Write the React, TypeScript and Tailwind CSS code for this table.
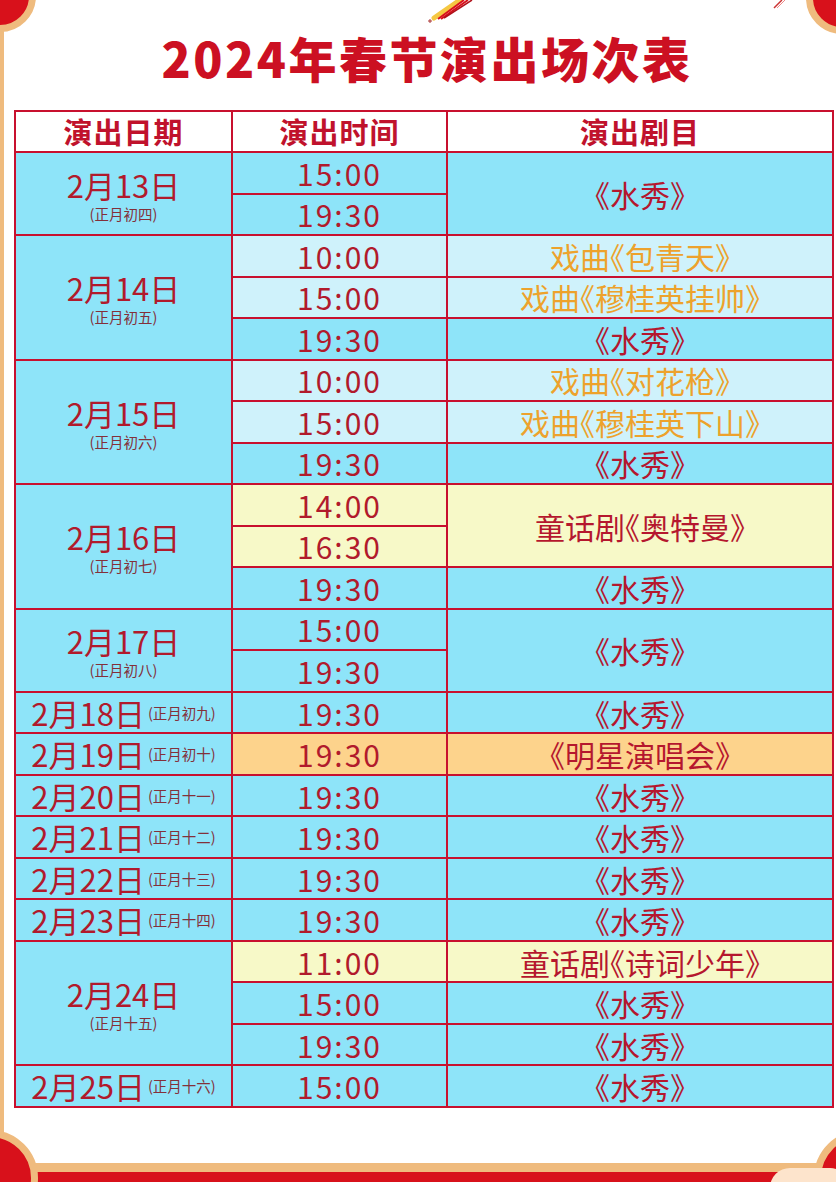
import React from 'react';

type Tone = 'b' | 'l' | 'y' | 'o';

interface Slot {
  time: string;
  tone: Tone;
  prog?: { text: string; span: number; tone: Tone; color: 'red' | 'orange' };
}

interface Day {
  date: string;
  lunar: string;
  slots: Slot[];
}

const SHUI = '《水秀》';

const days: Day[] = [
  {
    date: '2月13日',
    lunar: '正月初四',
    slots: [
      { time: '15:00', tone: 'b', prog: { text: SHUI, span: 2, tone: 'b', color: 'red' } },
      { time: '19:30', tone: 'b' },
    ],
  },
  {
    date: '2月14日',
    lunar: '正月初五',
    slots: [
      { time: '10:00', tone: 'l', prog: { text: '戏曲《包青天》', span: 1, tone: 'l', color: 'orange' } },
      { time: '15:00', tone: 'l', prog: { text: '戏曲《穆桂英挂帅》', span: 1, tone: 'l', color: 'orange' } },
      { time: '19:30', tone: 'b', prog: { text: SHUI, span: 1, tone: 'b', color: 'red' } },
    ],
  },
  {
    date: '2月15日',
    lunar: '正月初六',
    slots: [
      { time: '10:00', tone: 'l', prog: { text: '戏曲《对花枪》', span: 1, tone: 'l', color: 'orange' } },
      { time: '15:00', tone: 'l', prog: { text: '戏曲《穆桂英下山》', span: 1, tone: 'l', color: 'orange' } },
      { time: '19:30', tone: 'b', prog: { text: SHUI, span: 1, tone: 'b', color: 'red' } },
    ],
  },
  {
    date: '2月16日',
    lunar: '正月初七',
    slots: [
      { time: '14:00', tone: 'y', prog: { text: '童话剧《奥特曼》', span: 2, tone: 'y', color: 'red' } },
      { time: '16:30', tone: 'y' },
      { time: '19:30', tone: 'b', prog: { text: SHUI, span: 1, tone: 'b', color: 'red' } },
    ],
  },
  {
    date: '2月17日',
    lunar: '正月初八',
    slots: [
      { time: '15:00', tone: 'b', prog: { text: SHUI, span: 2, tone: 'b', color: 'red' } },
      { time: '19:30', tone: 'b' },
    ],
  },
  { date: '2月18日', lunar: '正月初九', slots: [{ time: '19:30', tone: 'b', prog: { text: SHUI, span: 1, tone: 'b', color: 'red' } }] },
  { date: '2月19日', lunar: '正月初十', slots: [{ time: '19:30', tone: 'o', prog: { text: '《明星演唱会》', span: 1, tone: 'o', color: 'red' } }] },
  { date: '2月20日', lunar: '正月十一', slots: [{ time: '19:30', tone: 'b', prog: { text: SHUI, span: 1, tone: 'b', color: 'red' } }] },
  { date: '2月21日', lunar: '正月十二', slots: [{ time: '19:30', tone: 'b', prog: { text: SHUI, span: 1, tone: 'b', color: 'red' } }] },
  { date: '2月22日', lunar: '正月十三', slots: [{ time: '19:30', tone: 'b', prog: { text: SHUI, span: 1, tone: 'b', color: 'red' } }] },
  { date: '2月23日', lunar: '正月十四', slots: [{ time: '19:30', tone: 'b', prog: { text: SHUI, span: 1, tone: 'b', color: 'red' } }] },
  {
    date: '2月24日',
    lunar: '正月十五',
    slots: [
      { time: '11:00', tone: 'y', prog: { text: '童话剧《诗词少年》', span: 1, tone: 'y', color: 'red' } },
      { time: '15:00', tone: 'b', prog: { text: SHUI, span: 1, tone: 'b', color: 'red' } },
      { time: '19:30', tone: 'b', prog: { text: SHUI, span: 1, tone: 'b', color: 'red' } },
    ],
  },
  { date: '2月25日', lunar: '正月十六', slots: [{ time: '15:00', tone: 'b', prog: { text: SHUI, span: 1, tone: 'b', color: 'red' } }] },
];

const toneBg: Record<Tone, string> = {
  b: 'bg-[#8ee4f9]',
  l: 'bg-[#cff2fb]',
  y: 'bg-[#f7f9c8]',
  o: 'bg-[#fdd38c]',
};

const spanCls: Record<number, string> = {
  1: 'row-span-1',
  2: 'row-span-2',
  3: 'row-span-3',
};

const Corner = ({ className }: { className: string }) => (
  <div className={`absolute rounded-full bg-[#d8111b] border-[7px] border-[#efbb7e] ${className}`} />
);

export default function App() {
  return (
    <div className="relative w-[836px] h-[1182px] overflow-hidden bg-white font-['Noto_Sans_CJK_SC',sans-serif]">
      {/* frame decorations */}
      <div className="absolute left-0 top-0 bottom-0 w-[4px] bg-[#efbb7e]" />
      <Corner className="-left-[36px] -top-[40px] w-[72px] h-[72px]" />
      <Corner className="left-[806px] -top-[38px] w-[72px] h-[72px]" />
      <div className="absolute left-0 right-0 bottom-0 h-[19px] bg-[#d8111b] border-t-[9px] border-[#efbb7e]" />
      <Corner className="-left-[58px] top-[1130px] w-[96px] h-[96px]" />
      <Corner className="left-[814px] top-[1130px] w-[96px] h-[96px]" />
      <div className="absolute left-[770px] top-[1168px] w-[80px] h-[40px] rounded-full bg-[#fde4cc]" />

      {/* streamer at the top */}
      <svg className="absolute left-[420px] top-0" width="60" height="24" viewBox="0 0 60 24">
        <path d="M14 18 L40 0" stroke="#f5c842" strokeWidth="5" strokeLinecap="round" />
        <path d="M18 19 L44 0" stroke="#d8111b" strokeWidth="2" />
        <path d="M21 19 L48 0" stroke="#d8111b" strokeWidth="2" />
        <path d="M24 18 L52 0" stroke="#b0101a" strokeWidth="1.5" />
        <path d="M8 21 L12 21 M10 19 L10 23" stroke="#a33" strokeWidth="1" />
      </svg>
      <svg className="absolute left-[770px] top-0" width="20" height="10" viewBox="0 0 20 10">
        <path d="M4 8 L12 0" stroke="#c33" strokeWidth="1.5" />
        <path d="M7 8 L15 0" stroke="#e88" strokeWidth="1" />
      </svg>

      <div className="relative flex flex-col">
        <div className="h-[110px] pt-[4px] pl-[18px] flex items-center justify-center">
          <h1 className="text-[48px] leading-none font-black tracking-[2.5px] text-[#cc1022]">
            2024年春节演出场次表
          </h1>
        </div>

        <div className="ml-[14px] w-[820px] h-[998px] grid grid-cols-[215px_213px_384px] grid-rows-[39px_repeat(23,minmax(0,1fr))] gap-[2px] border-2 border-[#c8102e] bg-[#c8102e]">
          {['演出日期', '演出时间', '演出剧目'].map((h) => (
            <div key={h} className="bg-white flex items-center justify-center text-[29px] font-bold tracking-[1px] text-[#c0122c]">
              {h}
            </div>
          ))}

          {days.map((d) => {
            const multi = d.slots.length > 1;
            return (
              <React.Fragment key={d.date}>
                <div
                  className={`col-start-1 ${spanCls[d.slots.length]} bg-[#8ee4f9] flex items-center justify-center text-[#b11a2c] ${
                    multi ? 'flex-col pt-[4px]' : 'gap-[3px]'
                  }`}
                >
                  <span className={`text-[31px] ${multi ? 'leading-[30px]' : 'leading-[32px]'}`}>{d.date}</span>
                  <span className={`text-[14.5px] leading-[16px] text-[#83303a] ${multi ? 'mt-[6px]' : ''}`}>
                    ({d.lunar})
                  </span>
                </div>
                {d.slots.map((s, i) => (
                  <React.Fragment key={i}>
                    <div
                      className={`col-start-2 ${toneBg[s.tone]} flex items-center justify-center text-[30px] leading-none tracking-[2px] text-[#b11a2c]`}
                    >
                      {s.time}
                    </div>
                    {s.prog && (
                      <div
                        className={`col-start-3 ${spanCls[s.prog.span]} ${toneBg[s.prog.tone]} flex items-center justify-center text-[30px] leading-none [font-feature-settings:'halt'] ${
                          s.prog.color === 'orange' ? 'text-[#eda22c]' : 'text-[#b5172e]'
                        }`}
                      >
                        {s.prog.text}
                      </div>
                    )}
                  </React.Fragment>
                ))}
              </React.Fragment>
            );
          })}
        </div>
      </div>
    </div>
  );
}
